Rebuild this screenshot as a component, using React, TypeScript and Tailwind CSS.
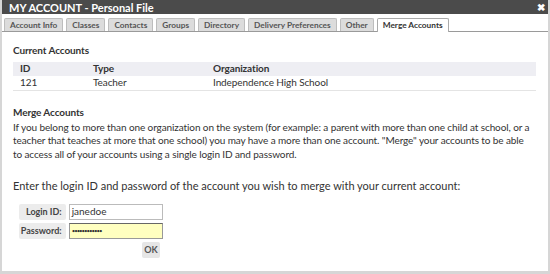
import React from "react";

const tabs = [
  "Account Info",
  "Classes",
  "Contacts",
  "Groups",
  "Directory",
  "Delivery Preferences",
  "Other",
  "Merge Accounts",
];

export default function App() {
  return (
    <div
      className="h-[274px] w-[550px] overflow-hidden bg-white text-[#333]"
      style={{ fontFamily: "Lato, 'Noto Sans', sans-serif" }}
    >
      <div className="flex h-full flex-col border-x-2 border-b-[3px] border-[#d6d6d6]">
        <div className="flex h-[14px] items-center justify-between bg-[#4b4b4b] pl-[7px] pr-[3px] text-[11px] font-bold leading-none text-white">
          <span>MY ACCOUNT - Personal File</span>
          <span className="text-[10px]">✖</span>
        </div>

        <div className="mt-[4px] flex gap-[3px] border-b border-[#9a9a9a] pl-[2px]">
          {tabs.map((t) => {
            const active = t === "Merge Accounts";
            return (
              <div
                key={t}
                className={
                  active
                    ? "-mb-px flex h-[14px] items-center rounded-t-[2px] border border-b-0 border-[#aaa] bg-white px-[5px] text-[8.3px] font-bold leading-none text-[#333]"
                    : "flex h-[13px] items-center rounded-t-[2px] border border-b-0 border-[#bdbdbd] bg-[#dcdcdc] px-[5px] text-[8.3px] font-bold leading-none text-[#555]"
                }
              >
                {t}
              </div>
            );
          })}
        </div>

        <div className="px-[11px] pt-[12px] text-[10px] leading-[13.5px] tracking-[-0.1px]">
          <div className="font-bold">Current Accounts</div>

          <table className="mt-[4px] w-[523px] border-collapse text-left">
            <thead>
              <tr className="bg-[#eeeef3]">
                <th className="h-[14px] w-[80px] pl-[7px] font-bold">ID</th>
                <th className="w-[120px] font-bold">Type</th>
                <th className="font-bold">Organization</th>
              </tr>
            </thead>
            <tbody>
              <tr className="border-b border-[#e4e4e4]">
                <td className="h-[15px] pl-[7px]">121</td>
                <td>Teacher</td>
                <td>Independence High School</td>
              </tr>
            </tbody>
          </table>

          <div className="mt-[15px] font-bold">Merge Accounts</div>
          <p className="mt-[1px] whitespace-nowrap">
            If you belong to more than one organization on the system (for example: a parent with
            more than one child at school, or a
            <br />
            teacher that teaches at more that one school) you may have a more than one account.
            "Merge" your accounts to be able
            <br />
            to access all of your accounts using a single login ID and password.
          </p>

          <div className="mt-[17px] text-[11px] leading-[15px] tracking-normal">
            Enter the login ID and password of the account you wish to merge with your current
            account:
          </div>

          <div className="mt-[11px] flex w-[150px] flex-col gap-[3px] pl-[6px] text-[9px] tracking-normal">
            <div className="flex gap-[3px]">
              <div className="flex h-[16px] w-[47px] items-center justify-end rounded-[2px] bg-[#ececec] pr-[4px] font-bold text-[#444]">
                Login ID:
              </div>
              <div className="flex h-[16px] w-[95px] items-center border border-[#bbb] bg-white px-[2px] text-[10px]">
                janedoe
              </div>
            </div>
            <div className="flex gap-[3px]">
              <div className="flex h-[16px] w-[47px] items-center justify-end rounded-[2px] bg-[#ececec] pr-[4px] font-bold text-[#444]">
                Password:
              </div>
              <div className="flex h-[16px] w-[95px] items-center border border-[#999] border-t-[#666] bg-[#ffffc0] px-[2px] text-[6px] tracking-[-1px]">
                ••••••••••••
              </div>
            </div>
            <div className="flex justify-end pr-[3px]">
              <div className="flex h-[16px] w-[18px] items-center justify-center rounded-[2px] bg-[#e6e6e6] font-bold text-[#555]">
                OK
              </div>
            </div>
          </div>
        </div>
      </div>
    </div>
  );
}
